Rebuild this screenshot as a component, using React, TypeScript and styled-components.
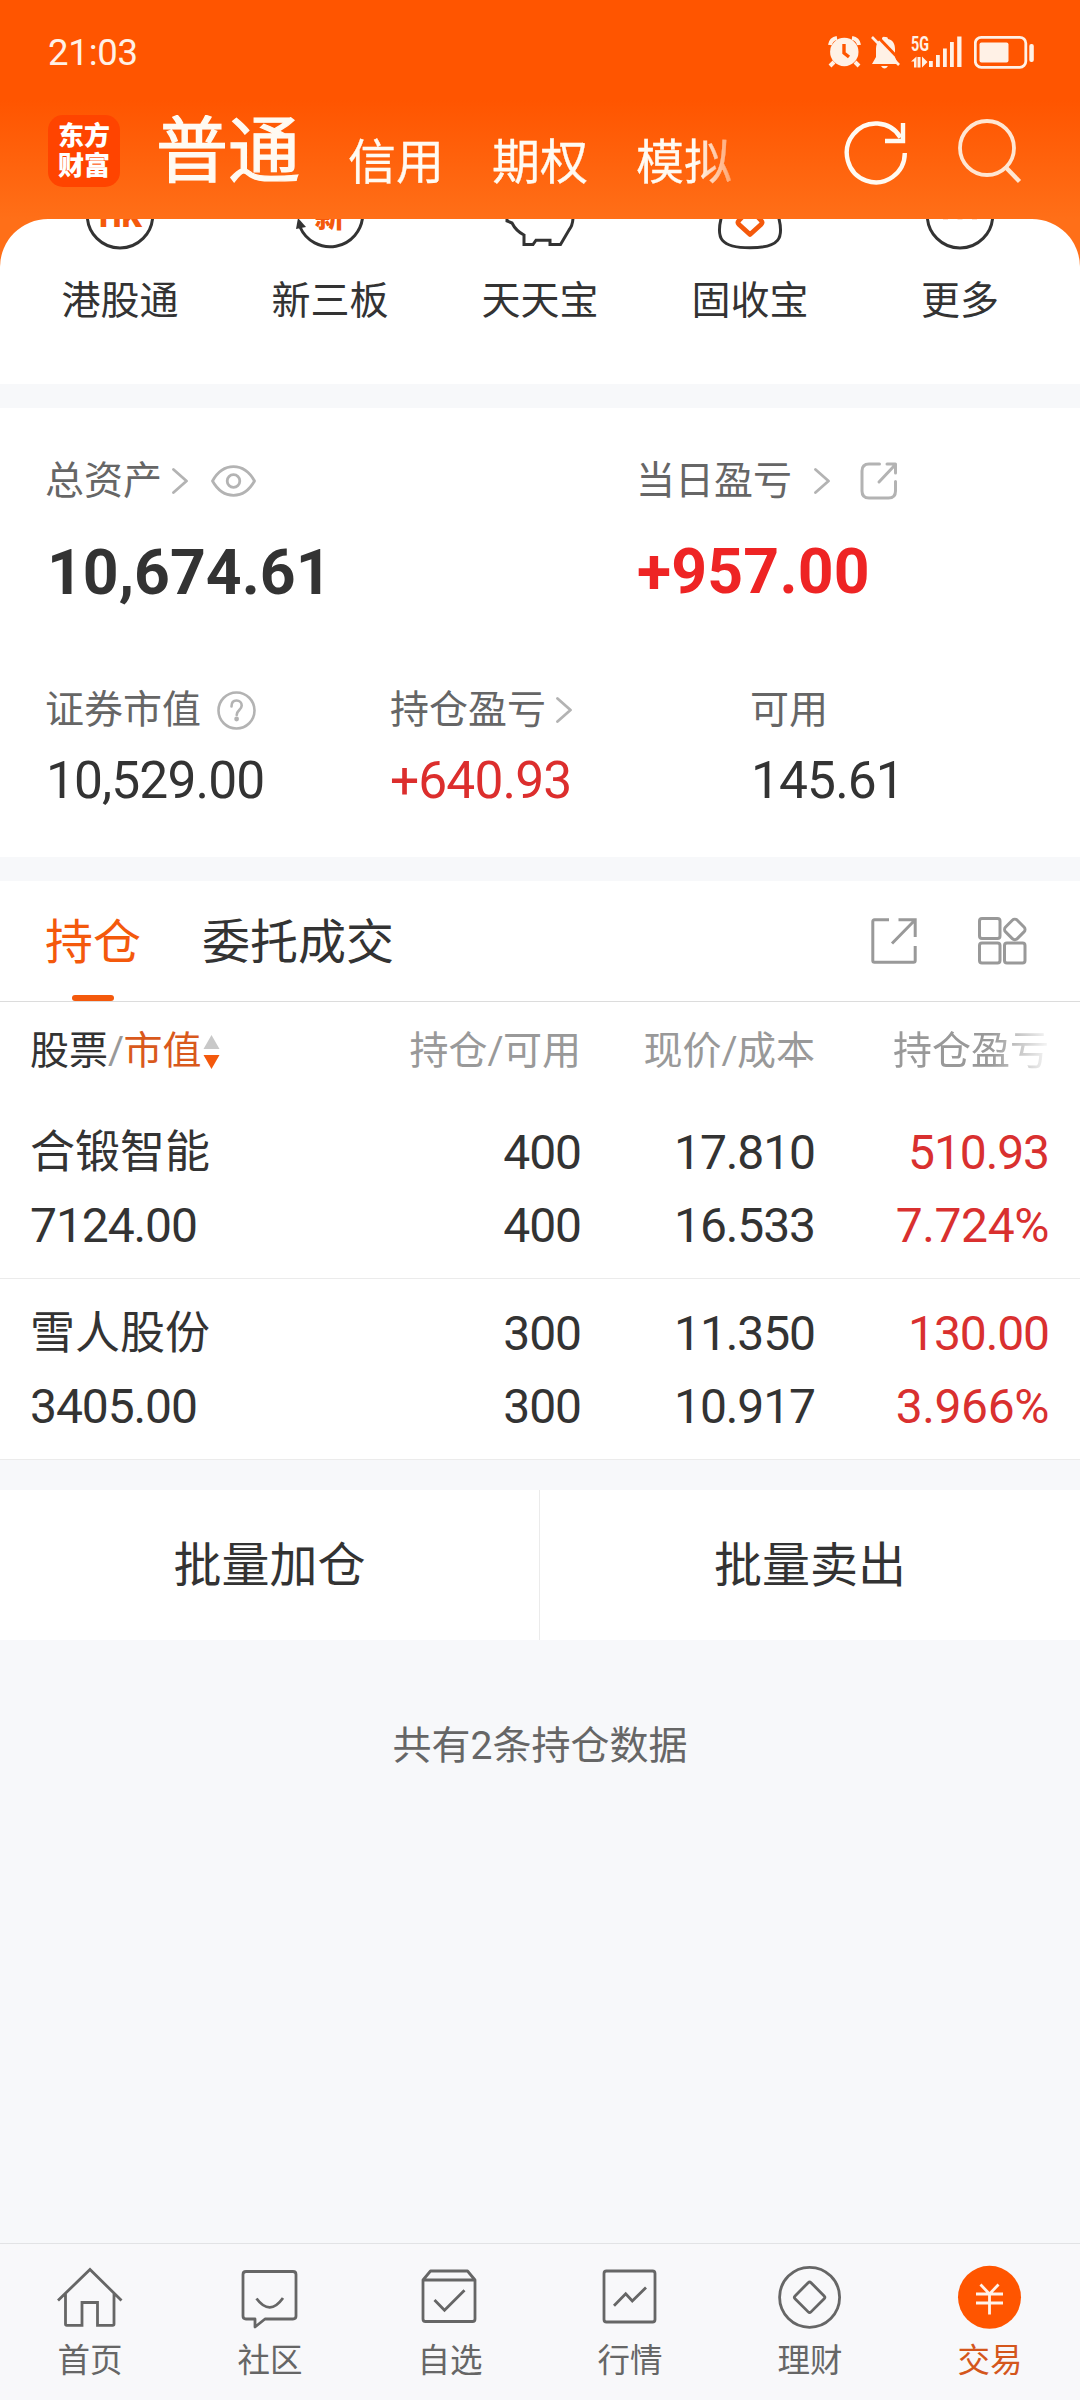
import React from 'react';
import styled, { createGlobalStyle } from 'styled-components';

const GlobalStyle = createGlobalStyle`
  * { box-sizing: border-box; }
  html, body { margin: 0; padding: 0; }
  body { width: 1080px; background: #f7f8fa; }
  svg { display: block; flex: none; }
`;

const ink = '#333333';
const orange = '#f4590c';

const Screen = styled.div`
  width: 1080px;
  height: 2400px;
  display: flex;
  flex-direction: column;
  background: #f7f8fa;
  color: ${ink};
  font-family: Roboto, 'Noto Sans CJK SC', sans-serif;
  overflow: hidden;
  white-space: nowrap;
`;

const Hero = styled.header`
  background: linear-gradient(180deg, #ff5500 0, #ff5500 100px, #ff6f18 219px, #ff6f18 100%);
`;

const StatusBar = styled.div`
  display: flex;
  align-items: center;
  height: 104px;
  padding: 0 46px 0 48px;
  color: #fff1e6;
`;

const Clock = styled.span`
  flex: 1;
  padding-top: 1px;
  font-size: 36.5px;
  line-height: 40px;
  letter-spacing: -0.2px;
`;

const StatusIcons = styled.div`
  display: flex;
  align-items: center;
`;

const TitleBar = styled.div`
  display: flex;
  align-items: flex-start;
  height: 115px;
  padding: 11px 58px 0 48px;
`;

const Logo = styled.div`
  width: 72px;
  height: 72px;
  margin-right: 36px;
  padding-top: 6px;
  border-radius: 15px;
  background: #ff4400;
  color: #fff;
  font-size: 26px;
  font-weight: 900;
  line-height: 30px;
  text-align: center;
`;

const ModeTabs = styled.nav`
  display: flex;
  align-items: flex-end;
  flex: 1;
  gap: 48px;
  color: #fffaf2;
  mask-image: linear-gradient(90deg, #000 540px, transparent 602px);
`;

const ModeTab = styled.span<{ $active?: boolean }>`
  font-size: ${p => (p.$active ? 72 : 48)}px;
  line-height: ${p => (p.$active ? 74 : 52)}px;
  -webkit-text-stroke: ${p => (p.$active ? 1.2 : 0.3)}px currentColor;
`;

const HeroActions = styled.div`
  display: flex;
  gap: 46px;
`;

const ShortcutCard = styled.section`
  display: grid;
  grid-template-columns: repeat(5, 210px);
  justify-content: center;
  height: 165px;
  background: #fff;
  border-radius: 48px 48px 0 0;
`;

const Shortcut = styled.div`
  display: flex;
  flex-direction: column;
  align-items: center;
  gap: 25px;
  font-size: 39px;
  line-height: 50px;
`;

const Summary = styled.section`
  height: 449px;
  margin-top: 24px;
  padding: 47px 45px 0;
  background: #fff;
`;

const PrimaryFigures = styled.div`
  display: grid;
  grid-template-columns: 591px 1fr;
  height: 229px;
`;

const SecondaryFigures = styled.div`
  display: grid;
  grid-template-columns: 345px 360px 1fr;
`;

const FigureLabel = styled.div`
  display: flex;
  align-items: center;
  height: 52px;
  color: #666;
  font-size: 39px;
  line-height: 52px;
`;

const Total = styled.div<{ $gain?: boolean }>`
  margin-top: ${p => (p.$gain ? 25 : 26)}px;
  padding-left: ${p => (p.$gain ? 1 : 2)}px;
  font-size: 62.5px;
  font-weight: 700;
  line-height: 80px;
  letter-spacing: ${p => (p.$gain ? 0.2 : 0)}px;
  color: ${p => (p.$gain ? '#ee2424' : ink)};
`;

const Amount = styled.div<{ $gain?: boolean }>`
  margin-top: 15px;
  padding-left: ${p => (p.$gain ? 0 : 1)}px;
  font-size: 51.5px;
  line-height: 60px;
  letter-spacing: -0.9px;
  color: ${p => (p.$gain ? '#dc2e2d' : ink)};
`;

const Spaced = styled.span<{ $left: number }>`
  display: flex;
  margin-left: ${p => p.$left}px;
`;

const Holdings = styled.section`
  margin-top: 24px;
  background: #fff;
`;

const HoldingTabs = styled.div`
  display: flex;
  height: 121px;
  padding: 0 52px 0 45px;
  border-bottom: 1px solid #dcdcdc;
`;

const HoldingTab = styled.div<{ $active?: boolean }>`
  display: flex;
  flex-direction: column;
  align-items: center;
  justify-content: space-between;
  margin-right: 61px;
  padding-top: 26px;
  font-size: 48px;
  line-height: 72px;
  color: ${p => (p.$active ? orange : ink)};
  &::after {
    content: '';
    width: 42px;
    height: 6px;
    border-radius: 3px;
    background: ${p => (p.$active ? orange : 'transparent')};
  }
`;

const TabTools = styled.div`
  display: flex;
  align-items: center;
  gap: 61px;
  margin-left: auto;
`;

const columns = '302px 249px 234px 234px';

const TableHead = styled.div`
  display: grid;
  grid-template-columns: ${columns};
  height: 96px;
  padding-left: 30px;
  color: #999;
  font-size: 39px;
  line-height: 99px;
`;

const HeadCell = styled.div<{ $fade?: boolean }>`
  text-align: right;
  ${p => p.$fade && 'mask-image: linear-gradient(90deg, #000 176px, rgba(0,0,0,.08) 234px);'}
`;

const SortCell = styled.div`
  display: flex;
  align-items: center;
`;

const Dark = styled.span`
  color: ${ink};
`;

const Slash = styled.span`
  letter-spacing: -0.5px;
`;

const Sorted = styled.span`
  margin-right: 1px;
  color: #d9591c;
`;

const HoldingRow = styled.div`
  display: grid;
  grid-template-columns: ${columns};
  height: 181px;
  padding: 18px 0 0 30px;
  border-bottom: 1px solid #ebebeb;
`;

const Cell = styled.div<{ $name?: boolean; $gain?: boolean }>`
  display: flex;
  flex-direction: column;
  font-size: 48px;
  line-height: 73px;
  letter-spacing: -1.1px;
  text-align: ${p => (p.$name ? 'left' : 'right')};
  color: ${p => (p.$gain ? '#d9302f' : ink)};
`;

const StockName = styled.span`
  font-size: 45px;
  letter-spacing: 0;
`;

const Rate = styled.span`
  letter-spacing: -0.4px;
`;

const BatchBar = styled.div`
  display: grid;
  grid-template-columns: 1fr 1fr;
  height: 150px;
  margin-top: 30px;
  background: #fff;
`;

const BatchButton = styled.button`
  padding: 2px 0 0;
  border: 0;
  border-right: 1px solid #ebebeb;
  background: none;
  color: ${ink};
  font: 48px/148px Roboto, 'Noto Sans CJK SC', sans-serif;
  &:last-child { border-right: 0; }
`;

const CountNote = styled.p`
  flex: 1;
  margin: 76px 0 0;
  color: #666;
  font-size: 39px;
  line-height: 60px;
  text-align: center;
`;

const BottomNav = styled.nav`
  display: grid;
  grid-template-columns: repeat(6, 180px);
  height: 157px;
  border-top: 1px solid #e2e3e5;
  background: #f8f8fa;
`;

const NavItem = styled.div<{ $active?: boolean }>`
  display: flex;
  flex-direction: column;
  align-items: center;
  gap: 2px;
  padding-top: 18px;
  color: ${p => (p.$active ? '#d4561c' : '#666')};
  font-size: 32.5px;
  line-height: 50px;
`;

const AlarmIcon = () => (
  <svg width="43" height="36" viewBox="828 34 43 36" fill="none" stroke="currentColor">
    <circle cx="844.3" cy="52" r="14.2" fill="currentColor" stroke="none" />
    <path d="M830 45q1-6 7-7M859 45q-1-6-7-7" strokeWidth="4" />
    <path d="M834 62l-4 4M855 62l4 4" strokeWidth="4" />
    <path d="M844 44v9l5 4" stroke="#ff5500" strokeWidth="3.4" />
  </svg>
);

const MuteIcon = () => (
  <svg width="40" height="36" viewBox="871 34 40 36" fill="currentColor">
    <path d="M885 37h1a2 2 0 0 1 2 2c5 1 7 5 7 10v8l3 7h-26l4-7v-8c0-5 2-9 6-10a2 2 0 0 1 3-2zM881 66h7q-3.500 5-7 0z" />
    <path d="M875 34l27 28" stroke="#ff5500" strokeWidth="3" />
    <path d="M872 37l27 28" stroke="currentColor" strokeWidth="2.600" />
  </svg>
);

const SignalIcon = () => (
  <svg width="63" height="36" viewBox="911 34 63 36" fill="currentColor">
    <text x="911" y="50.800" fontSize="19.500" fontWeight="700" textLength="18" lengthAdjust="spacingAndGlyphs">5G</text>
    <path d="M911 61.500l5.500-5v11H914v-6zM920.500 57v10.500h-3V57zM922 56.500l5.500 5.500-5.500 5.500z" />
    <path d="M929 61h3.800v6H929zM936 55h3.800v12H936zM943 48.500h3.800V67H943zM950 42h3.800v25H950zM957.200 36.500h4.300V67h-4.300z" />
  </svg>
);

const BatteryIcon = () => (
  <svg width="60" height="36" viewBox="974 34 60 36" fill="currentColor">
    <rect x="975.300" y="37.300" width="50.500" height="30" rx="6" fill="none" stroke="currentColor" strokeWidth="2.800" />
    <rect x="979.500" y="42.500" width="29" height="20" rx="2" />
    <rect x="1029.300" y="44" width="4.500" height="18" rx="2" />
  </svg>
);

const RefreshIcon = () => (
  <svg width="66" height="70" viewBox="843 115 66 70" fill="none" stroke="#fffaf2" strokeWidth="4.400">
    <path d="M904.800 153A29 29.400 0 1 1 900.500 137.500" />
    <path d="M903 123v18h-18" />
  </svg>
);

const SearchIcon = () => (
  <svg width="67" height="70" viewBox="955 115 67 70" fill="none" stroke="#ffe6d2" strokeWidth="3.800">
    <circle cx="987" cy="148" r="27" />
    <path d="M1006 167.500l13.500 14" strokeWidth="4.400" />
  </svg>
);

const ChevronIcon = () => (
  <svg width="16" height="26" viewBox="0 0 16 26" fill="none" stroke="#b3b3b3" strokeWidth="2.800" strokeLinecap="round" strokeLinejoin="round">
    <path d="M1.500 1.500L14.500 13 1.500 24.500" />
  </svg>
);

const EyeIcon = () => (
  <svg width="45" height="32" viewBox="0 0 45 32" fill="none" stroke="#b3b3b3" strokeWidth="2.800" strokeLinejoin="round">
    <path d="M1.500 16C6 8 13 1.700 22.500 1.700S39 8 43.500 16C39 24 32 30.300 22.500 30.300S6 24 1.500 16z" />
    <circle cx="22.500" cy="16" r="6.300" />
  </svg>
);

const HelpIcon = () => (
  <svg width="39" height="39" viewBox="0 0 39 39" fill="none" stroke="#b3b3b3" strokeWidth="2.600">
    <circle cx="19.500" cy="19.500" r="18" />
    <path d="M14.500 15.500c0-4 2-6 5-6s5.200 2 5.200 5c0 4.500-5 4.500-5 9.500" strokeLinecap="round" />
    <circle cx="19.600" cy="28" r="2.400" fill="#b3b3b3" stroke="none" />
  </svg>
);

const ShareRoundIcon = () => (
  <svg width="38" height="38" viewBox="0 0 38 38" fill="none" stroke="#b3b3b3" strokeWidth="3" strokeLinecap="round" strokeLinejoin="round">
    <path d="M19.500 2H9q-7 0-7 7v20q0 7 7 7h19.500q7 0 7-7V19.500" />
    <path d="M27 2h8.500v9M35 3L19 20" />
  </svg>
);

const ShareIcon = () => (
  <svg width="46" height="46" viewBox="0 0 46 46" fill="none" stroke="#999" strokeWidth="3">
    <path d="M18 1.800H3.500q-1.700 0-1.700 1.700v39q0 1.700 1.700 1.700h39q1.700 0 1.700-1.700V28" />
    <path d="M27.500 1.800h16.700V19M43.500 2.500L21 25.500" />
  </svg>
);

const GridIcon = () => (
  <svg width="50" height="48" viewBox="0 0 50 48" fill="none" stroke="#999" strokeWidth="3">
    <rect x="1.500" y="1.500" width="20.500" height="20" rx="2.500" />
    <rect x="1.500" y="26" width="20.500" height="20" rx="2.500" />
    <rect x="26.500" y="26" width="20.500" height="20" rx="2.500" />
    <rect x="28.500" y="4.200" width="16.500" height="16.500" rx="3.500" transform="rotate(45 36.800 12.500)" />
  </svg>
);

const SortIcon = () => (
  <svg width="17" height="36" viewBox="0 0 17 36">
    <path d="M8.500 1L16.500 15H.5z" fill="#c8c8c8" />
    <path d="M8.500 35L16.500 21H.5z" fill={orange} />
  </svg>
);

const ShortcutArt = ({ children }: { children: React.ReactNode }) => (
  <svg width="80" height="32" viewBox="-40 0 80 32" fill="none" stroke={ink} strokeWidth="3">
    {children}
  </svg>
);

const shortcuts = [
  {
    label: '港股通',
    art: (
      <>
        <circle cx="0" cy="-3.700" r="32.700" />
        <text x="-21" y="7.800" fontSize="31" fontWeight="900" textLength="43" lengthAdjust="spacingAndGlyphs" fill={orange} stroke="none">HK</text>
      </>
    ),
  },
  {
    label: '新三板',
    art: (
      <>
        <path d="M32.700-3.700A32.700 32.700 0 0 1-30 8" />
        <path d="M-34 10l2-11 8 9z" fill={ink} stroke="none" />
        <text x="-15.500" y="8" fontSize="30" fontWeight="900" fill={orange} stroke="none">新</text>
      </>
    ),
  },
  {
    label: '天天宝',
    art: <path d="M-33-2v4l5 2q4 8 12 12v9.500h9l3-4.300H10v4.300h10.500L29 11q4-5 4-13" />,
  },
  {
    label: '固收宝',
    art: (
      <>
        <path d="M-28-4C-35 20-29 28.800 0 28.800S35 20 28-4" />
        <path d="M-6-4L-11 1.500q-2 2 0 4L0 15.500 11 5.500q2-2 0-4L6-4" stroke={orange} strokeWidth="4.800" strokeLinejoin="round" />
      </>
    ),
  },
  {
    label: '更多',
    art: (
      <>
        <circle cx="0" cy="-3.700" r="32.700" />
        <path d="M-17 0h5M-2.500 0h5M12 0h5" stroke={orange} strokeWidth="1" opacity=".4" />
      </>
    ),
  },
];

const holdings = [
  { name: '合锻智能', value: '7124.00', held: '400', usable: '400', price: '17.810', cost: '16.533', gain: '510.93', rate: '7.724%' },
  { name: '雪人股份', value: '3405.00', held: '300', usable: '300', price: '11.350', cost: '10.917', gain: '130.00', rate: '3.966%' },
];

const navItems = [
  {
    label: '首页',
    art: <path d="M4 38.500L36 7.500 67.500 38.500M11.500 31.500V62q0 1.300 1.300 1.300H28V40.500h15.500v22.800h15.200q1.300 0 1.300-1.300V31.500" />,
  },
  {
    label: '社区',
    art: (
      <>
        <path d="M12 9.500h47q3 0 3 3V54q0 3-3 3H31l-10 8v-8h-9q-3 0-3-3V12.500q0-3 3-3z" strokeLinejoin="round" />
        <path d="M22.500 36.500q13.300 18 26.500-.5" />
      </>
    ),
  },
  {
    label: '自选',
    art: (
      <>
        <path d="M9 18v39q0 2.500 2.500 2.500h47q2.500 0 2.500-2.500V18L53.500 9h-37zM9 18h52" strokeLinejoin="round" />
        <path d="M20.500 38l10 10.300 20-20" />
      </>
    ),
  },
  {
    label: '行情',
    art: (
      <>
        <rect x="10" y="9" width="51" height="51" rx="2.500" />
        <path d="M20 43.700l11.700-12 6.600 7.300L52 25.500" />
      </>
    ),
  },
  {
    label: '理财',
    art: (
      <>
        <circle cx="35.600" cy="35.300" r="30" />
        <rect x="24.300" y="24" width="22.600" height="22.600" rx="2" transform="rotate(45 35.600 35.300)" />
      </>
    ),
  },
  {
    label: '交易',
    active: true,
    art: (
      <>
        <circle cx="35.500" cy="35.300" r="31.500" fill="#ff5500" stroke="none" />
        <path d="M26.500 22.500l9 9.500 9-9.500M35.500 32v20.500M22 32h27M22 41h27" stroke="#fff3ea" />
      </>
    ),
  },
];

export default function App() {
  return (
    <Screen>
      <GlobalStyle />
      <Hero>
        <StatusBar>
          <Clock>21:03</Clock>
          <StatusIcons>
            <AlarmIcon />
            <MuteIcon />
            <SignalIcon />
            <BatteryIcon />
          </StatusIcons>
        </StatusBar>
        <TitleBar>
          <Logo>东方<br />财富</Logo>
          <ModeTabs>
            <ModeTab $active>普通</ModeTab>
            <ModeTab>信用</ModeTab>
            <ModeTab>期权</ModeTab>
            <ModeTab>模拟</ModeTab>
          </ModeTabs>
          <HeroActions>
            <RefreshIcon />
            <SearchIcon />
          </HeroActions>
        </TitleBar>
        <ShortcutCard>
          {shortcuts.map(s => (
            <Shortcut key={s.label}>
              <ShortcutArt>{s.art}</ShortcutArt>
              {s.label}
            </Shortcut>
          ))}
        </ShortcutCard>
      </Hero>

      <Summary>
        <PrimaryFigures>
          <div>
            <FigureLabel>
              总资产
              <Spaced $left={10}><ChevronIcon /></Spaced>
              <Spaced $left={23}><EyeIcon /></Spaced>
            </FigureLabel>
            <Total>10,674.61</Total>
          </div>
          <div>
            <FigureLabel>
              当日盈亏
              <Spaced $left={22}><ChevronIcon /></Spaced>
              <Spaced $left={30}><ShareRoundIcon /></Spaced>
            </FigureLabel>
            <Total $gain>+957.00</Total>
          </div>
        </PrimaryFigures>
        <SecondaryFigures>
          <div>
            <FigureLabel>
              证券市值
              <Spaced $left={16}><HelpIcon /></Spaced>
            </FigureLabel>
            <Amount>10,529.00</Amount>
          </div>
          <div>
            <FigureLabel>
              持仓盈亏
              <Spaced $left={10}><ChevronIcon /></Spaced>
            </FigureLabel>
            <Amount $gain>+640.93</Amount>
          </div>
          <div>
            <FigureLabel>可用</FigureLabel>
            <Amount>145.61</Amount>
          </div>
        </SecondaryFigures>
      </Summary>

      <Holdings>
        <HoldingTabs>
          <HoldingTab $active>持仓</HoldingTab>
          <HoldingTab>委托成交</HoldingTab>
          <TabTools>
            <ShareIcon />
            <GridIcon />
          </TabTools>
        </HoldingTabs>
        <TableHead>
          <SortCell>
            <Dark>股票</Dark><Slash>/</Slash><Sorted>市值</Sorted>
            <SortIcon />
          </SortCell>
          <HeadCell>持仓<Slash>/</Slash>可用</HeadCell>
          <HeadCell>现价<Slash>/</Slash>成本</HeadCell>
          <HeadCell $fade>持仓盈亏</HeadCell>
        </TableHead>
        {holdings.map(h => (
          <HoldingRow key={h.name}>
            <Cell $name><StockName>{h.name}</StockName><span>{h.value}</span></Cell>
            <Cell><span>{h.held}</span><span>{h.usable}</span></Cell>
            <Cell><span>{h.price}</span><span>{h.cost}</span></Cell>
            <Cell $gain><span>{h.gain}</span><Rate>{h.rate}</Rate></Cell>
          </HoldingRow>
        ))}
      </Holdings>

      <BatchBar>
        <BatchButton>批量加仓</BatchButton>
        <BatchButton>批量卖出</BatchButton>
      </BatchBar>
      <CountNote>共有2条持仓数据</CountNote>

      <BottomNav>
        {navItems.map(n => (
          <NavItem key={n.label} $active={n.active}>
            <svg width="72" height="72" viewBox="0 0 72 72" fill="none" stroke="#666" strokeWidth="2.800">
              {n.art}
            </svg>
            {n.label}
          </NavItem>
        ))}
      </BottomNav>
    </Screen>
  );
}
